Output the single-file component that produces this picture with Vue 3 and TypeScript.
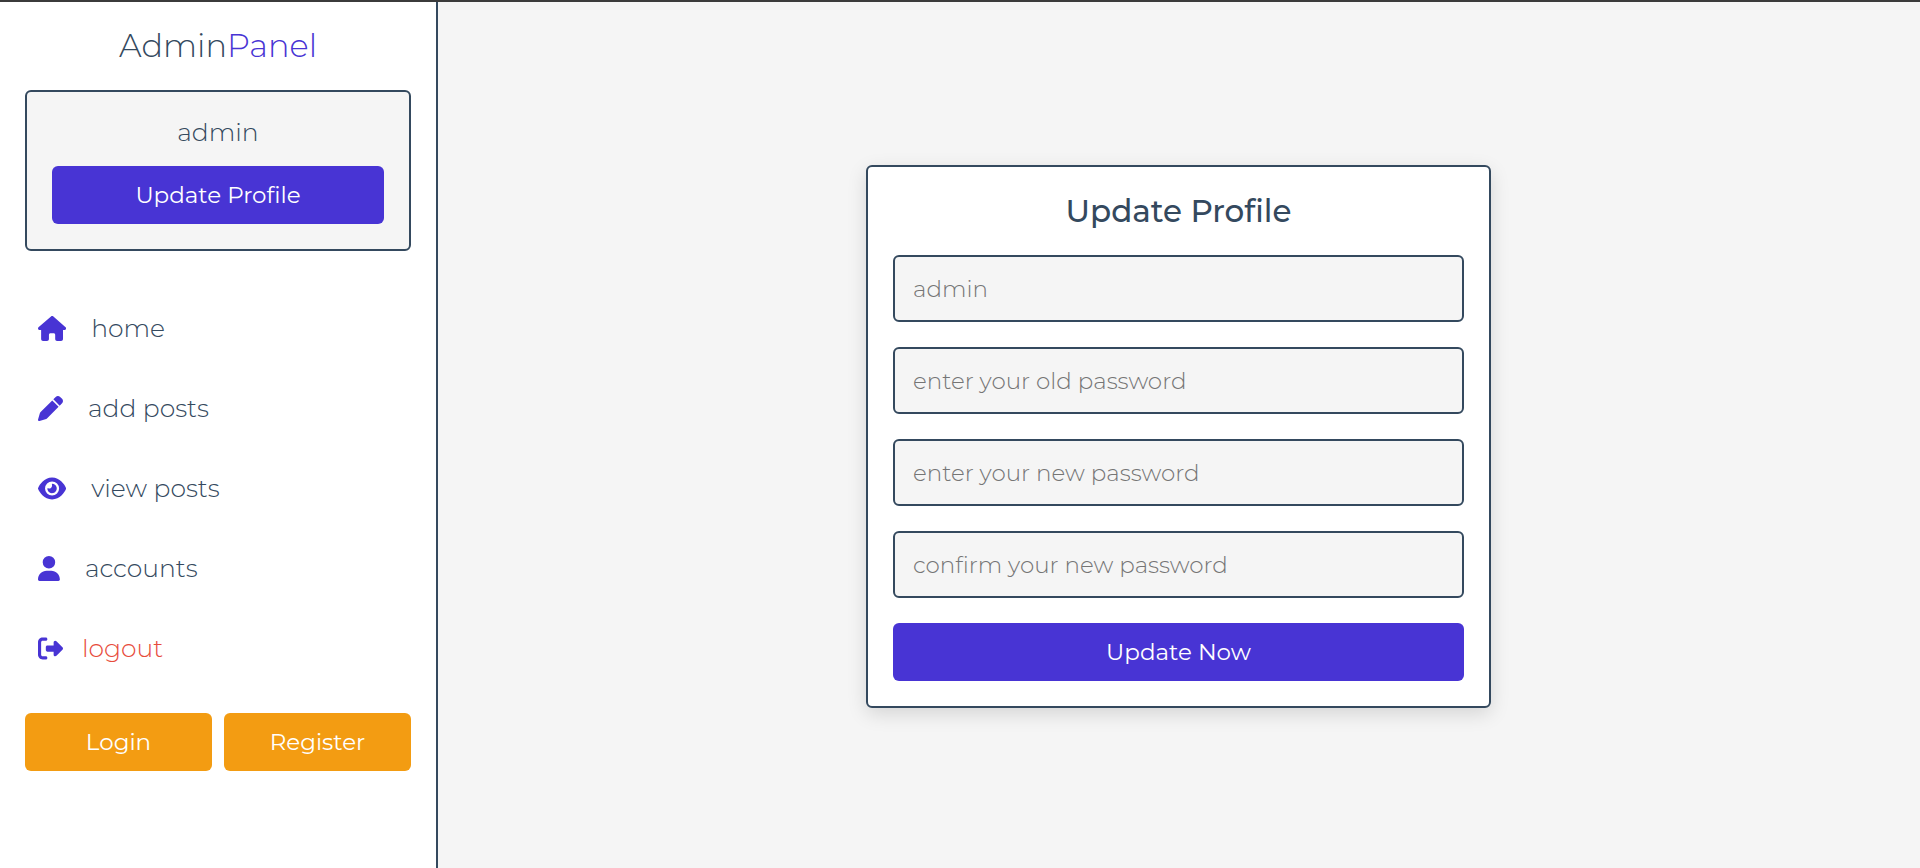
<script setup lang="ts">
import { ref } from 'vue'

interface NavItem {
  label: string
  width: number
  icon: string
  danger?: boolean
}

interface Field {
  name: string
  type: string
  placeholder: string
}

const navItems: NavItem[] = [
  {
    label: 'home',
    width: 576,
    icon: 'M575.8 255.5c0 18-15 32.1-32 32.1h-32l.7 160.2c0 2.7-.2 5.4-.5 8.1V472c0 22.1-17.9 40-40 40H456c-1.1 0-2.2 0-3.3-.1c-1.4 .1-2.8 .1-4.2 .1H416 392c-22.1 0-40-17.9-40-40V448 384c0-17.7-14.3-32-32-32H256c-17.7 0-32 14.3-32 32v64 24c0 22.1-17.9 40-40 40H160 128.1c-1.5 0-3-.1-4.5-.2c-1.2 .1-2.4 .2-3.6 .2H104c-22.1 0-40-17.9-40-40V360c0-.9 0-1.9 .1-2.8V287.6H32c-18 0-32-14-32-32.1c0-9 3-17 10-24L266.4 8c7-7 15-8 22-8s15 2 21 7L564.8 231.5c8 7 12 15 11 24z',
  },
  {
    label: 'add posts',
    width: 512,
    icon: 'M362.7 19.3L314.3 67.7 444.3 197.7l48.4-48.4c25-25 25-65.5 0-90.5L453.3 19.3c-25-25-65.5-25-90.5 0zm-71 71L58.6 323.5c-10.4 10.4-18 23.3-22.2 37.4L1 481.2C-1.5 489.7 .8 498.8 7 505s15.3 8.5 23.7 6.1l120.3-35.4c14.1-4.2 27-11.8 37.4-22.2L421.7 220.3 291.7 90.3z',
  },
  {
    label: 'view posts',
    width: 576,
    icon: 'M288 32c-80.8 0-145.5 36.8-192.6 80.6C48.6 156 17.3 208 2.5 243.7c-3.3 7.9-3.3 16.7 0 24.6C17.3 304 48.6 356 95.4 399.4C142.5 443.2 207.2 480 288 480s145.5-36.8 192.6-80.6c46.8-43.5 78.1-95.4 93-131.1c3.3-7.9 3.3-16.7 0-24.6c-14.9-35.7-46.2-87.7-93-131.1C433.5 68.8 368.8 32 288 32zM144 256a144 144 0 1 1 288 0 144 144 0 1 1 -288 0zm144-64c0 35.3-28.7 64-64 64c-7.1 0-13.9-1.2-20.3-3.3c-5.5-1.8-11.9 1.6-11.7 7.4c.3 6.9 1.3 13.8 3.2 20.7c13.7 51.2 66.4 81.6 117.6 67.9s81.6-66.4 67.9-117.6c-11.1-41.5-47.8-69.4-88.6-71.1c-5.8-.2-9.2 6.1-7.4 11.7c2.1 6.4 3.3 13.2 3.3 20.3z',
  },
  {
    label: 'accounts',
    width: 448,
    icon: 'M224 256A128 128 0 1 0 224 0a128 128 0 1 0 0 256zm-45.7 48C79.8 304 0 383.8 0 482.3C0 498.7 13.3 512 29.7 512H418.3c16.4 0 29.7-13.3 29.7-29.7C448 383.8 368.2 304 269.7 304H178.3z',
  },
  {
    label: 'logout',
    width: 512,
    danger: true,
    icon: 'M377.9 105.9L500.7 228.7c7.2 7.2 11.3 17.1 11.3 27.3s-4.1 20.1-11.3 27.3L377.9 406.1c-6.4 6.4-15 9.9-24 9.9c-18.7 0-33.9-15.2-33.9-33.9l0-62.1-128 0c-17.7 0-32-14.3-32-32l0-64c0-17.7 14.3-32 32-32l128 0 0-62.1c0-18.7 15.2-33.9 33.9-33.9c9 0 17.6 3.6 24 9.9zM160 96L96 96c-17.7 0-32 14.3-32 32l0 256c0 17.7 14.3 32 32 32l64 0c17.7 0 32 14.3 32 32s-14.3 32-32 32l-64 0c-53 0-96-43-96-96L0 128C0 75 43 32 96 32l64 0c17.7 0 32 14.3 32 32s-14.3 32-32 32z',
  },
]

const fields: Field[] = [
  { name: 'name', type: 'text', placeholder: 'admin' },
  { name: 'old_pass', type: 'password', placeholder: 'enter your old password' },
  { name: 'new_pass', type: 'password', placeholder: 'enter your new password' },
  { name: 'confirm_pass', type: 'password', placeholder: 'confirm your new password' },
]

const values = ref<Record<string, string>>({ name: '', old_pass: '', new_pass: '', confirm_pass: '' })
</script>

<template>
  <div class="page">
    <header class="sidebar">
      <a href="#" class="logo">Admin<span>Panel</span></a>

      <div class="profile">
        <p>admin</p>
        <a href="#" class="btn">Update Profile</a>
      </div>

      <nav class="navbar">
        <a v-for="item in navItems" :key="item.label" href="#" :class="{ danger: item.danger }">
          <svg :viewBox="`0 0 ${item.width} 512`" aria-hidden="true"><path :d="item.icon" /></svg>
          <span>{{ item.label }}</span>
        </a>
      </nav>

      <div class="account-links">
        <a href="#" class="btn option">Login</a>
        <a href="#" class="btn option">Register</a>
      </div>
    </header>

    <main class="content">
      <form class="card" @submit.prevent>
        <h3>Update Profile</h3>
        <input
          v-for="field in fields"
          :key="field.name"
          v-model="values[field.name]"
          class="box"
          :type="field.type"
          :name="field.name"
          :placeholder="field.placeholder"
          :aria-label="field.placeholder"
          autocomplete="off"
        />
        <button type="submit" class="btn">Update Now</button>
      </form>
    </main>
  </div>
</template>

<style>
body {
  margin: 0;
  background: #f5f5f5;
}
</style>

<style scoped>
.page,
.page * {
  box-sizing: border-box;
}

.page {
  display: flex;
  min-height: 100vh;
  border-top: 2px solid #3b3b3b;
  background: #f5f5f5;
  color: #34495e;
  font-family: Montserrat, Inter, 'Open Sans', sans-serif;
  font-weight: 300;
}

a {
  color: inherit;
  text-decoration: none;
}

.sidebar {
  flex: none;
  width: 438px;
  padding: 24px 25px;
  border-right: 2px solid #34495e;
  background: #fff;
}

.logo {
  display: block;
  margin-bottom: 24px;
  font-size: 32px;
  line-height: 40px;
  text-align: center;
}

.logo span {
  color: #4834d4;
}

.profile {
  padding: 24px 25px 25px;
  border: 2px solid #34495e;
  border-radius: 6px;
  background: #f5f5f5;
  text-align: center;
}

.profile p {
  margin: 0 0 18px;
  font-size: 25px;
  line-height: 32px;
}

.btn {
  display: block;
  width: 100%;
  padding: 12px 25px;
  border: 0;
  border-radius: 6px;
  background: #4834d4;
  color: #fff;
  font-family: inherit;
  font-size: 23px;
  font-weight: 400;
  line-height: 34px;
  text-align: center;
  cursor: pointer;
}

.option {
  background: #f39c12;
}

.navbar {
  margin: 37px 0 25px;
}

.navbar a {
  display: flex;
  align-items: center;
  gap: 25px;
  height: 80px;
  padding: 0 13px;
  font-size: 25px;
}

.navbar svg {
  flex: none;
  height: 25px;
  fill: #4834d4;
}

.navbar .danger {
  gap: 19px;
  color: #e74c3c;
}

.account-links {
  display: flex;
  gap: 12px;
}

.content {
  display: flex;
  flex: 1;
  align-items: center;
  justify-content: center;
  padding: 28px 26px 25px 25px;
}

.card {
  display: flex;
  flex-direction: column;
  gap: 25px;
  width: 100%;
  max-width: 625px;
  padding: 25px;
  border: 2px solid #34495e;
  border-radius: 6px;
  background: #fff;
  box-shadow: 0 6px 19px rgba(0, 0, 0, 0.13);
}

.card h3 {
  margin: 0;
  font-size: 31px;
  font-weight: 500;
  line-height: 38px;
  text-align: center;
}

.box {
  width: 100%;
  height: 67px;
  padding: 0 18px;
  border: 2px solid #34495e;
  border-radius: 6px;
  background: #f5f5f5;
  color: #34495e;
  font-family: inherit;
  font-size: 23px;
  font-weight: 300;
}

.box::placeholder {
  color: #757575;
  opacity: 1;
}
</style>
